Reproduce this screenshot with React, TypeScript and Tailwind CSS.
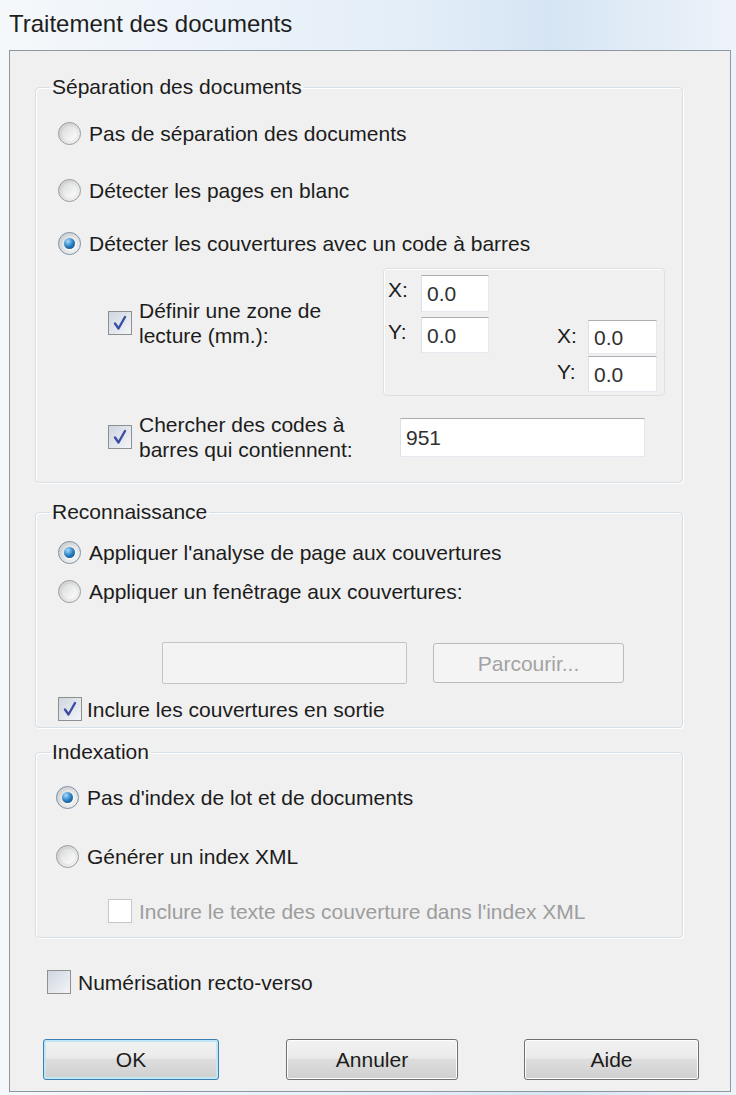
import type { ReactNode } from "react"

function Radio({ checked = false }: { checked?: boolean }) {
  return (
    <div
      className={`flex h-[23px] w-[23px] shrink-0 items-center justify-center rounded-full border ${
        checked ? "border-[#7c8ea3]" : "border-[#9a9b9b]"
      } bg-[linear-gradient(135deg,#c9cbcd,#f6f6f6)]`}
    >
      <div className="flex h-[15px] w-[15px] items-center justify-center rounded-full bg-[linear-gradient(135deg,#d9dadb,#ffffff)]">
        {checked && (
          <div className="h-[11px] w-[11px] rounded-full bg-[radial-gradient(circle_at_35%_30%,#a8dcff,#2a80c2_50%,#0b3e70)]" />
        )}
      </div>
    </div>
  )
}

function Checkbox({ checked = false, disabled = false }: { checked?: boolean; disabled?: boolean }) {
  return (
    <div
      className={`flex h-[24px] w-[24px] shrink-0 items-center justify-center border ${
        disabled ? "border-[#c4c6c8] bg-white" : "border-[#8e8f8f] bg-[linear-gradient(135deg,#cfd6e0,#f3f5f8)]"
      }`}
    >
      {checked && (
        <svg width="20" height="20" viewBox="0 0 20 20">
          <path d="M5 10.5 L8.5 15.5 L15 4" fill="none" stroke="#3d4fa3" strokeWidth="2.4" strokeLinecap="round" strokeLinejoin="round" />
        </svg>
      )}
    </div>
  )
}

function Group({ label, className, children }: { label: string; className?: string; children: ReactNode }) {
  return (
    <fieldset className={`rounded-[4px] border border-[#d5dfe5] shadow-[inset_1px_1px_0_#ffffff,1px_1px_0_#ffffff] ${className ?? ""}`}>
      <legend className="ml-[14px] px-[2px] leading-[24px]">{label}</legend>
      {children}
    </fieldset>
  )
}

function Field({ value = "", className }: { value?: string; className?: string }) {
  return (
    <div
      className={`flex items-center border border-[#e3e9ef] border-t-[#abadb3] border-l-[#dbdfe6] bg-white pl-[5px] text-[#303030] ${className ?? ""}`}
    >
      {value}
    </div>
  )
}

function Button({ label, focused = false, disabled = false, className }: { label: string; focused?: boolean; disabled?: boolean; className?: string }) {
  return (
    <div
      className={`flex items-center justify-center rounded-[3px] border ${
        disabled
          ? "border-[#b9bcbe] bg-[#f4f4f4] text-[#a3a3a3]"
          : focused
            ? "border-[#3c7fb1] bg-[linear-gradient(#f2f2f2,#ebebeb_45%,#dddddd_50%,#cfcfcf)] shadow-[inset_0_0_0_2px_#bfe7f7]"
            : "border-[#707070] bg-[linear-gradient(#f2f2f2,#ebebeb_45%,#dddddd_50%,#cfcfcf)] shadow-[inset_0_0_0_1px_#fcfcfc]"
      } ${className ?? ""}`}
    >
      {label}
    </div>
  )
}

export default function App() {
  return (
    <div className="flex h-[1095px] w-[736px] flex-col bg-[linear-gradient(90deg,#f5f8fb,#e4eef8_55%,#d6e5f4_75%,#edf3f9)] font-['Liberation_Sans',Arial,sans-serif] text-[21px] leading-[25px] text-[#1c1c1c]">
      {/* Title bar */}
      <div className="flex h-[50px] shrink-0 items-center pl-[9px] pb-[4px] text-[24px] text-[#1e1e1e]">Traitement des documents</div>

      {/* Client area */}
      <div className="mb-[3px] ml-[9px] mr-[5px] flex flex-1 flex-col border border-[#8d97a2] bg-[#f0f0f0]">
        <Group label="Séparation des documents" className="ml-[25px] mt-[24px] w-[648px] pb-[20px]">
          <div className="pt-[19px]">
            <div className="flex h-[30px] items-center gap-[8px] pl-[22px]">
              <Radio />
              <span>Pas de séparation des documents</span>
            </div>
            <div className="mt-[27px] flex h-[30px] items-center gap-[8px] pl-[22px]">
              <Radio />
              <span>Détecter les pages en blanc</span>
            </div>
            <div className="mt-[23px] flex h-[30px] items-center gap-[8px] pl-[22px]">
              <Radio checked />
              <span>Détecter les couvertures avec un code à barres</span>
            </div>
          </div>

          <div className="mt-[10px] flex items-start">
            <div className="mt-[30px] flex w-[347px] items-center gap-[7px] pl-[72px]">
              <Checkbox checked />
              <span>
                Définir une zone de
                <br />
                lecture (mm.):
              </span>
            </div>
            <div className="flex h-[128px] w-[282px] rounded-[4px] border border-[#d9e1e6] shadow-[inset_1px_1px_0_#ffffff]">
              <div className="flex flex-col gap-[5px] pl-[4px] pt-[6px]">
                <div className="flex items-start">
                  <span className="w-[33px] pt-[2px]">X:</span>
                  <Field value="0.0" className="h-[37px] w-[68px]" />
                </div>
                <div className="flex items-start">
                  <span className="w-[33px] pt-[2px]">Y:</span>
                  <Field value="0.0" className="h-[36px] w-[68px]" />
                </div>
              </div>
              <div className="ml-auto flex flex-col gap-[2px] pr-[7px] pt-[51px]">
                <div className="flex items-start">
                  <span className="w-[31px] pt-[3px]">X:</span>
                  <Field value="0.0" className="h-[34px] w-[69px]" />
                </div>
                <div className="flex items-start">
                  <span className="w-[31px] pt-[3px]">Y:</span>
                  <Field value="0.0" className="h-[36px] w-[69px]" />
                </div>
              </div>
            </div>
          </div>

          <div className="mt-[16px] flex items-center">
            <div className="flex w-[364px] items-center gap-[7px] pl-[72px]">
              <Checkbox checked />
              <span>
                Chercher des codes à
                <br />
                barres qui contiennent:
              </span>
            </div>
            <Field value="951" className="h-[39px] w-[245px] border-t-[#7d9b9a]" />
          </div>
        </Group>

        <Group label="Reconnaissance" className="ml-[25px] mt-[17px] w-[648px] pb-[5px]">
          <div className="pt-[13px]">
            <div className="flex h-[30px] items-center gap-[8px] pl-[22px]">
              <Radio checked />
              <span>Appliquer l'analyse de page aux couvertures</span>
            </div>
            <div className="mt-[9px] flex h-[30px] items-center gap-[8px] pl-[22px]">
              <Radio />
              <span>Appliquer un fenêtrage aux couvertures:</span>
            </div>
          </div>
          <div className="mt-[36px] flex items-center pl-[126px]">
            <div className="h-[42px] w-[245px] rounded-[2px] border border-[#c3c6c9] bg-[#f3f3f3]" />
            <Button label="Parcourir..." disabled className="ml-[26px] h-[40px] w-[191px]" />
          </div>
          <div className="mt-[12px] flex h-[26px] items-center gap-[5px] pl-[22px]">
            <Checkbox checked />
            <span>Inclure les couvertures en sortie</span>
          </div>
        </Group>

        <Group label="Indexation" className="ml-[25px] mt-[12px] w-[648px] pb-[13px]">
          <div className="pt-[18px]">
            <div className="flex h-[30px] items-center gap-[8px] pl-[20px]">
              <Radio checked />
              <span>Pas d'index de lot et de documents</span>
            </div>
            <div className="mt-[29px] flex h-[30px] items-center gap-[8px] pl-[20px]">
              <Radio />
              <span>Générer un index XML</span>
            </div>
            <div className="mt-[27px] flex h-[26px] items-center gap-[7px] pl-[72px] text-[#9d9d9d]">
              <Checkbox disabled />
              <span>Inclure le texte des couverture dans l'index XML</span>
            </div>
          </div>
        </Group>

        <div className="mt-[31px] flex h-[26px] items-center gap-[7px] pl-[37px]">
          <Checkbox />
          <span>Numérisation recto-verso</span>
        </div>

        <div className="mt-[44px] flex pl-[33px]">
          <Button label="OK" focused className="h-[41px] w-[176px]" />
          <Button label="Annuler" className="ml-[67px] h-[41px] w-[172px]" />
          <Button label="Aide" className="ml-[66px] h-[41px] w-[175px]" />
        </div>
      </div>
    </div>
  )
}
